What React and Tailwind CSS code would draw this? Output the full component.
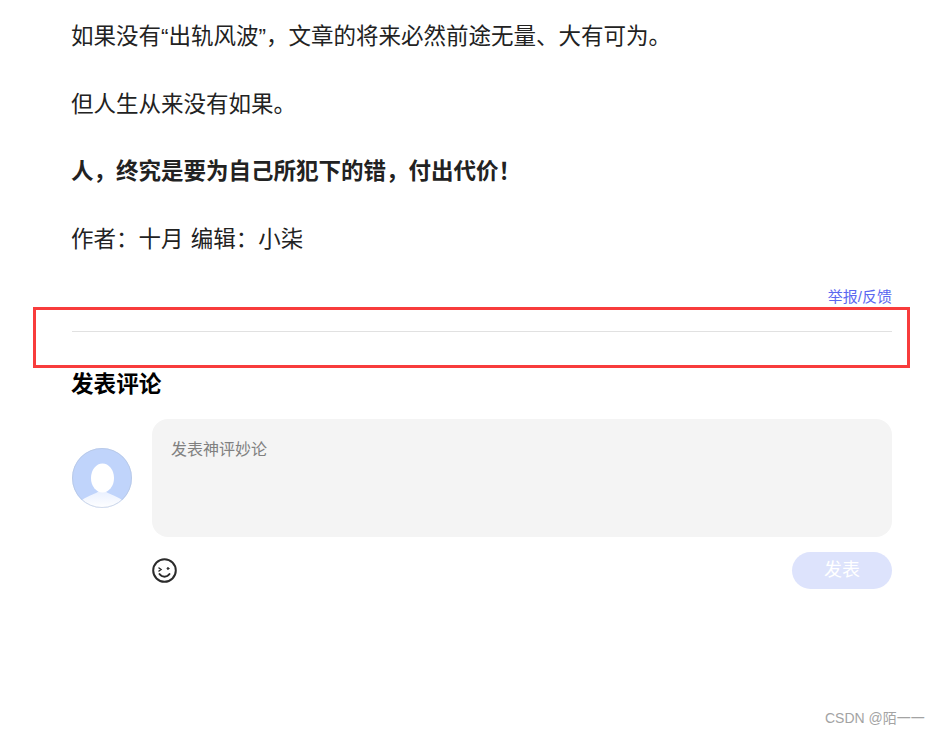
const font = { fontFamily: '"Liberation Sans", "Noto Sans CJK SC", sans-serif' }

function Avatar() {
  return (
    <svg width="60" height="60" viewBox="0 0 60 60" className="shrink-0">
      <defs>
        <clipPath id="round">
          <circle cx="30" cy="30" r="30" />
        </clipPath>
        <linearGradient id="shoulder" x1="0" y1="0" x2="0" y2="1">
          <stop offset="0" stopColor="#e9f0ff" />
          <stop offset="1" stopColor="#ffffff" />
        </linearGradient>
      </defs>
      <g clipPath="url(#round)">
        <rect width="60" height="60" fill="#c0d4fb" />
        <path d="M10 52C17 47 24 46 27 43L33 43C36 46 43 47 50 52L50 60L10 60Z" fill="url(#shoulder)" />
        <ellipse cx="30.5" cy="30" rx="11.5" ry="14.5" fill="#ffffff" />
      </g>
      <circle cx="30" cy="30" r="29.5" fill="none" stroke="#b4c3dc" strokeOpacity="0.6" />
    </svg>
  )
}

function Smiley() {
  return (
    <svg width="25" height="25" viewBox="0 0 25 25" fill="none" stroke="#2b2b2b" strokeLinecap="round">
      <circle cx="12.5" cy="12.5" r="11.3" strokeWidth="2" />
      <path d="M7 10L9 11.5L7 13" strokeWidth="1.5" />
      <circle cx="16" cy="10.5" r="0.9" fill="#2b2b2b" strokeWidth="1" />
      <path d="M7.5 16C10 19.5 15 19.5 17.5 16" strokeWidth="2" />
    </svg>
  )
}

export default function App() {
  return (
    <div className="relative h-[734px] w-[940px] overflow-hidden bg-white" style={font}>
      <div className="ml-[72px] w-[820px] pt-[20px]">
        {/* Article body */}
        <div className="flex flex-col gap-[33.67px] text-[22.5px] leading-[34px] text-[#222222]">
          <p className="-ml-px">如果没有“出轨风波”，文章的将来必然前途无量、大有可为。</p>
          <p className="-ml-px">但人生从来没有如果。</p>
          <p className="-ml-px font-bold">人，终究是要为自己所犯下的错，付出代价！</p>
          <p className="-ml-px [word-spacing:1px]">作者：十月 编辑：小柒</p>
        </div>

        <div className="mt-[30px] text-right text-[15px] leading-[20px] text-[#5b68f0]">举报/反馈</div>
        <div className="mt-[24px] h-px bg-[#e1e1e1]" />

        {/* Comment box */}
        <h2 className="-ml-px mt-[36px] text-[22.6px] font-bold leading-[34px] text-black">发表评论</h2>
        <div className="mt-[17px] flex">
          <div className="w-[80px] pt-[29px]">
            <Avatar />
          </div>
          <div className="flex-1">
            <div className="h-[118px] rounded-[16px] bg-[#f4f4f4] px-[19px] py-[20px] text-[16px] leading-[22px] text-[#808080]">
              发表神评妙论
            </div>
            <div className="mt-[15px] flex items-center justify-between">
              <Smiley />
              <button className="h-[37px] w-[100px] rounded-full bg-[#dde3fc] text-[18px] text-white">发表</button>
            </div>
          </div>
        </div>
      </div>

      {/* Red annotation frame */}
      <div className="absolute left-[33px] top-[307px] h-[61px] w-[877px] border-[3px] border-[#f83c3c]" />
      {/* Watermark */}
      <div className="absolute left-[825px] top-[709px] text-[14px] leading-[18px] text-[#a3a3a3]">CSDN @陌一一</div>
    </div>
  )
}
